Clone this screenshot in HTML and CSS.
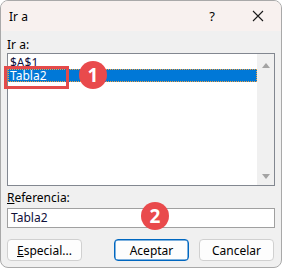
FILE: index.html
```html
<!DOCTYPE html>
<html>
<head>
    <title>Ir a</title>
    <link rel="stylesheet" href="styles.css">
</head>
<body>
    <div class="dialog">
        <div class="titlebar">
            <span class="title">Ir a</span>
            <span class="help">?</span>
            <span class="close">
                <svg width="12" height="12" viewBox="0 0 12 12"><path d="M1 1 L11 11 M11 1 L1 11" stroke="#1a1a1a" stroke-width="1.1" fill="none"/></svg>
            </span>
        </div>

        <div class="content">
            <div class="label">Ir a:</div>
            <div class="list">
                <div class="items">
                    <div class="item">$A$1</div>
                    <div class="item selected">Tabla2</div>
                </div>
                <div class="scrollbar">
                    <span class="arrow up"></span>
                    <span class="arrow down"></span>
                </div>
            </div>

            <div class="label ref-label"><u>R</u>eferencia:</div>
            <div class="field">Tabla2</div>

            <div class="buttons">
                <button class="btn"><u>E</u>special...</button>
                <div class="btn-group">
                    <button class="btn default">Aceptar</button>
                    <button class="btn">Cancelar</button>
                </div>
            </div>
        </div>

        <!-- annotations over the dialog -->
        <div class="highlight"></div>
        <div class="badge badge-1">1</div>
        <div class="badge badge-2">2</div>
    </div>
</body>
</html>
```

FILE: styles.css
```css
* {
    margin: 0;
    padding: 0;
    box-sizing: border-box;
}

body {
    background: #fff;
    font-family: 'Segoe UI', 'Noto Sans', sans-serif;
    font-size: 12px;
    color: #000;
}

.dialog {
    position: relative;
    width: 282px;
    height: 268px;
    border: 1px solid #a9a9a9;
    border-radius: 8px;
    background: #f0f0f0;
    overflow: hidden;
}

.titlebar {
    height: 30px;
    background: #f8f1ef;
    display: flex;
    align-items: center;
    padding-left: 8px;
}

.title {
    flex: 1;
    font-size: 12px;
}

.help {
    width: 46px;
    text-align: center;
    font-size: 13px;
    margin-right: 0;
}

.close {
    width: 46px;
    display: flex;
    justify-content: center;
    align-items: center;
}

.content {
    padding: 0 6px;
}

.label {
    height: 16px;
    line-height: 16px;
    margin-top: 6px;
    color: #000;
}

.list {
    height: 133px;
    border: 1px solid #828790;
    background: #fff;
    display: flex;
}

.items {
    flex: 1;
    padding-top: 2px;
}

.item {
    height: 13px;
    line-height: 13px;
    padding-left: 2px;
    color: #10103a;
}

.selected {
    background: #0078d7;
    color: #fff;
    outline: 1px dotted #f0a040;
    outline-offset: -1px;
}

.scrollbar {
    width: 17px;
    background: #f0f0f0;
    display: flex;
    flex-direction: column;
    justify-content: space-between;
    align-items: center;
    padding: 9px 0 6px;
}

.arrow {
    width: 0;
    height: 0;
    border-left: 4px solid transparent;
    border-right: 4px solid transparent;
}

.arrow.up {
    border-bottom: 5px solid #a3a3a3;
}

.arrow.down {
    border-top: 5px solid #a3a3a3;
}

.ref-label {
    margin-top: 4px;
    height: 18px;
    line-height: 16px;
}

.field {
    height: 20px;
    border: 1px solid #a0a0a0;
    background: #fff;
    line-height: 18px;
    padding-left: 3px;
    color: #10103a;
}

.buttons {
    display: flex;
    justify-content: space-between;
    margin-top: 11px;
    padding-right: 1px;
}

.btn-group {
    display: flex;
    gap: 10px;
}

.btn {
    width: 75px;
    height: 22px;
    background: #fdfdfd;
    border: 1px solid #d0d0d0;
    border-radius: 4px;
    font-family: 'Segoe UI', 'Noto Sans', sans-serif;
    font-size: 12px;
    color: #000;
}

.btn.default {
    border-color: #0067c0;
    box-shadow: inset 0 0 0 0.5px #0067c0;
}

.highlight {
    position: absolute;
    left: 3px;
    top: 65px;
    width: 65px;
    height: 23px;
    border: 3px solid #e34a4a;
}

.badge {
    position: absolute;
    width: 28px;
    height: 28px;
    border-radius: 50%;
    background: #e94a4c;
    color: #fff;
    font-family: 'Noto Sans', sans-serif;
    font-size: 19px;
    font-weight: 700;
    line-height: 28px;
    text-align: center;
}

.badge-1 {
    left: 78px;
    top: 60px;
}

.badge-2 {
    left: 140px;
    top: 201px;
}
```
